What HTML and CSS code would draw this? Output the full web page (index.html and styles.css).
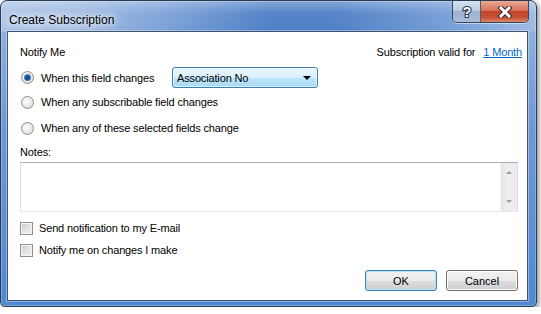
FILE: index.html
```html
<!DOCTYPE html>
<html>
<head>
  <title>Create Subscription</title>
  <meta name="viewport" content="width=device-width, initial-scale=1.0">
  <link rel="stylesheet" href="styles.css">
</head>
<body>
  <div class="window">
    <div class="titlebar">
      <span class="title">Create Subscription</span>
      <div class="caption">
        <span class="cap help">
          <svg width="12" height="14" viewBox="0 0 12 14">
            <text x="6" y="12" text-anchor="middle" class="q">?</text>
          </svg>
        </span>
        <span class="cap close">
          <svg width="16" height="12" viewBox="0 0 16 12">
            <path d="M4 2 L12 10 M12 2 L4 10" stroke="#3a2a2a" stroke-width="5" stroke-linecap="square" fill="none"/>
            <path d="M4 2 L12 10 M12 2 L4 10" stroke="#fff" stroke-width="3" stroke-linecap="square" fill="none"/>
          </svg>
        </span>
      </div>
    </div>

    <div class="client">
      <div class="row head">
        <span>Notify Me</span>
        <span class="valid">Subscription valid for <a href="#">1 Month</a></span>
      </div>

      <div class="row first">
        <label class="radio wide"><span class="dot checked"></span>When this field changes</label>
        <div class="combo">
          <span>Association No</span>
          <span class="arrow"></span>
        </div>
      </div>

      <div class="row second">
        <label class="radio"><span class="dot"></span>When any subscribable field changes</label>
      </div>

      <div class="row third">
        <label class="radio"><span class="dot"></span>When any of these selected fields change</label>
      </div>

      <div class="row notes-label">Notes:</div>

      <div class="notes">
        <div class="notes-text"></div>
        <div class="scroll">
          <span class="up"></span>
          <span class="down"></span>
        </div>
      </div>

      <div class="row check1">
        <label class="check"><span class="box"></span>Send notification to my E-mail</label>
      </div>

      <div class="row check2">
        <label class="check"><span class="box"></span>Notify me on changes I make</label>
      </div>

      <div class="buttons">
        <button class="btn default">OK</button>
        <button class="btn">Cancel</button>
      </div>
    </div>
  </div>
</body>
</html>
```

FILE: styles.css
```css
body {
  margin: 0;
  padding: 0;
  background-color: #fff;
  font-family: "Liberation Sans", Arial, sans-serif;
  font-size: 11px;
  letter-spacing: -0.15px;
  color: #000;
}

.window {
  width: 537px;
  height: 307px;
  box-sizing: border-box;
  border: 1px solid #2b3b50;
  border-radius: 7px 7px 5px 5px;
  padding: 0 8px 5px 6px;
  display: flex;
  flex-direction: column;
  background:
    linear-gradient(180deg, rgba(255,255,255,0.3) 0, rgba(255,255,255,0.05) 12px, rgba(255,255,255,0) 30px),
    linear-gradient(90deg, #a9c3e7 0%, #a2bde4 12%, #7ea3d8 30%, #4f7fc6 50%, #4f7fc6 62%, #78a0d8 85%, #9fbbe4 100%),
    linear-gradient(180deg, #9ab8e2 0%, #6f99d6 40%, #5088d2 100%);
  background-size: 100% 31px, 100% 31px, 100% 100%;
  background-repeat: no-repeat;
  box-shadow: inset 0 0 0 1px rgba(255,255,255,0.25), 2px 2px 5px rgba(0,0,0,0.45);
}

.titlebar {
  height: 30px;
  display: flex;
  align-items: flex-start;
  justify-content: space-between;
}

.title {
  margin-top: 11px;
  padding-left: 2px;
  line-height: 16px;
  font-size: 12px;
  letter-spacing: 0;
  color: #000;
  text-shadow: 0 0 6px #fff, 0 0 10px #fff, 0 0 14px rgba(255,255,255,0.8);
}

.caption {
  display: flex;
  margin-right: -1px;
  border: 1px solid #34465e;
  border-top: none;
  border-radius: 0 0 5px 5px;
  overflow: hidden;
  box-shadow: 0 1px 0 rgba(255,255,255,0.5);
}

.cap {
  height: 21px;
  display: flex;
  align-items: center;
  justify-content: center;
}

.help {
  width: 27px;
  border-right: 1px solid #4d5f78;
  background: linear-gradient(180deg, #d6e2f1 0%, #bccde4 45%, #9db2cf 50%, #a9bdd8 100%);
}

.close {
  width: 47px;
  background: linear-gradient(180deg, #e9a996 0%, #d9735a 45%, #c3432b 50%, #c8533a 80%, #dc8a6a 100%);
}

.q {
  font-family: "Liberation Sans", Arial, sans-serif;
  font-size: 14px;
  font-weight: bold;
  fill: #fff;
  stroke: #2e3a4c;
  stroke-width: 2.2px;
  paint-order: stroke;
}

.client {
  flex: 1;
  background-color: #fff;
  border: 1px solid #3e5471;
  box-shadow: 0 0 0 1px rgba(255,255,255,0.35);
  padding: 12px 9px 8px 12px;
  display: flex;
  flex-direction: column;
}

.row {
  display: flex;
  align-items: center;
  height: 16px;
  line-height: 16px;
}

.head {
  justify-content: space-between;
  margin-right: -4px;
}

.valid a {
  color: #0066cc;
  margin-left: 5px;
  text-decoration: underline;
}

.first {
  height: 21px;
  margin-top: 7px;
}

.second {
  margin-top: 6px;
}

.third {
  margin-top: 10px;
}

.notes-label {
  margin-top: 8px;
}

.radio,
.check {
  display: flex;
  align-items: center;
}

.radio.wide {
  width: 152px;
  flex: none;
}

.dot {
  width: 13px;
  height: 13px;
  box-sizing: border-box;
  border: 1px solid #8e8f8f;
  border-radius: 50%;
  margin: 0 7px 0 1px;
  background: radial-gradient(circle at 45% 40%, #ffffff 0, #f1f1f1 35%, #d2d2d2 100%);
  display: flex;
  align-items: center;
  justify-content: center;
}

.dot.checked::after {
  content: "";
  width: 7px;
  height: 7px;
  border-radius: 50%;
  background: radial-gradient(circle at 50% 55%, #0e3565 0, #1f5a9a 40%, #5a9ad6 75%, #a9d4f4 100%);
}

.combo {
  width: 146px;
  height: 21px;
  box-sizing: border-box;
  border: 1px solid #3c7fb1;
  border-radius: 3px;
  padding: 0 6px 0 4px;
  display: flex;
  align-items: center;
  justify-content: space-between;
  background: linear-gradient(180deg, #eaf6fd 0%, #d9f0fc 50%, #bee6fd 51%, #a7d9f5 100%);
  box-shadow: inset 0 0 0 1px rgba(255,255,255,0.6);
}

.arrow {
  width: 0;
  height: 0;
  border-left: 4px solid transparent;
  border-right: 4px solid transparent;
  border-top: 4px solid #000;
}

.notes {
  margin-top: 2px;
  height: 50px;
  box-sizing: border-box;
  border: 1px solid #dbdfe6;
  border-top-color: #abadb3;
  border-bottom-color: #e3e9ef;
  display: flex;
}

.notes-text {
  flex: 1;
}

.scroll {
  width: 17px;
  background: linear-gradient(90deg, #e4e4e4 0%, #eeeeee 40%, #ececec 100%);
  border-left: 1px solid #f6f6f6;
  display: flex;
  flex-direction: column;
  align-items: center;
  justify-content: space-between;
  padding: 8px 0;
  box-sizing: border-box;
}

.up {
  width: 0;
  height: 0;
  border-left: 3px solid transparent;
  border-right: 3px solid transparent;
  border-bottom: 3px solid #9a9a9a;
}

.down {
  width: 0;
  height: 0;
  border-left: 3px solid transparent;
  border-right: 3px solid transparent;
  border-top: 3px solid #9a9a9a;
}

.check1 {
  margin-top: 8px;
}

.check2 {
  margin-top: 6px;
}

.box {
  width: 13px;
  height: 13px;
  box-sizing: border-box;
  border: 1px solid #8e8f8f;
  margin-right: 6px;
  background: linear-gradient(135deg, #cbcbcb 0%, #e6e6e6 60%, #f3f3f3 100%);
  box-shadow: inset 0 0 0 1px #f6f6f6;
}

.buttons {
  margin-top: 12px;
  display: flex;
  justify-content: flex-end;
  gap: 9px;
}

.btn {
  width: 72px;
  height: 21px;
  box-sizing: border-box;
  border: 1px solid #707070;
  border-radius: 3px;
  padding: 0;
  font-family: "Liberation Sans", Arial, sans-serif;
  font-size: 11px;
  color: #000;
  background: linear-gradient(180deg, #f2f2f2 0%, #ebebeb 50%, #dddddd 51%, #cfcfcf 100%);
  box-shadow: inset 0 0 0 1px #fcfcfc;
}

.btn.default {
  border-color: #3c7fb1;
  box-shadow: inset 0 0 0 1px #b6e3f9;
}
```
